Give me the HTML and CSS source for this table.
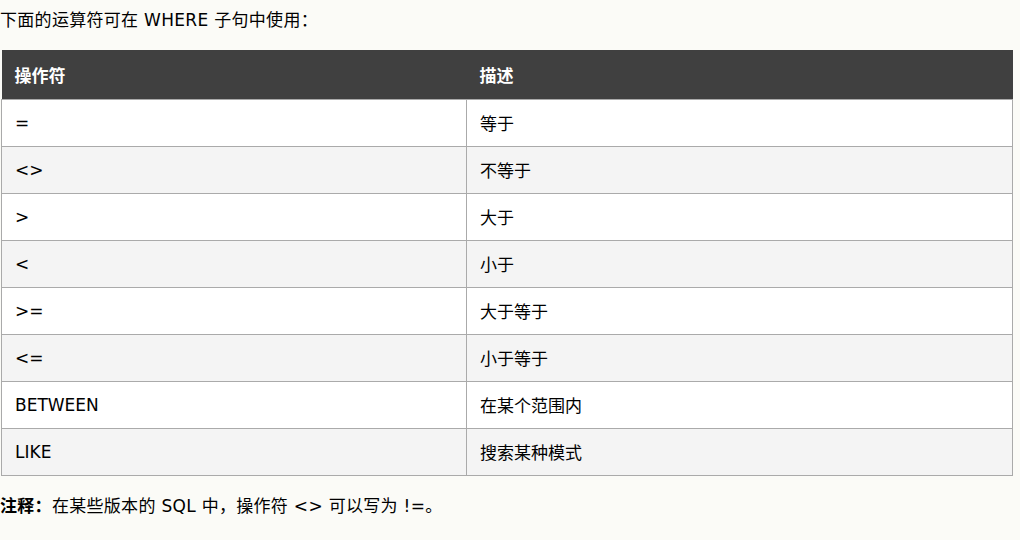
FILE: index.html
```html
<!DOCTYPE html>
<html lang="zh-CN">
<head>
<meta charset="utf-8">
<link rel="stylesheet" href="styles.css">
</head>
<body>
<div class="page">
  <p class="intro">下面的运算符可在 WHERE 子句中使用：</p>
  <table class="ops">
    <thead>
      <tr><th class="col-op">操作符</th><th>描述</th></tr>
    </thead>
    <tbody>
      <tr><td>=</td><td>等于</td></tr>
      <tr><td>&lt;&gt;</td><td>不等于</td></tr>
      <tr><td>&gt;</td><td>大于</td></tr>
      <tr><td>&lt;</td><td>小于</td></tr>
      <tr><td>&gt;=</td><td>大于等于</td></tr>
      <tr><td>&lt;=</td><td>小于等于</td></tr>
      <tr><td>BETWEEN</td><td>在某个范围内</td></tr>
      <tr><td>LIKE</td><td>搜索某种模式</td></tr>
    </tbody>
  </table>
  <p class="note"><b>注释：</b>在某些版本的 SQL 中，操作符 &lt;&gt; 可以写为 !=。</p>
</div>
</body>
</html>
```
FILE: styles.css
```css
html, body {
  margin: 0;
  padding: 0;
  background: #fbfbf7;
}
body {
  font-family: "DejaVu Sans", Verdana, "Noto Sans CJK SC", sans-serif;
  font-size: 17px;
  color: #000;
}
.page {
  padding: 0 7px 0 1px;
}
.intro {
  margin: 0 0 18px -1px;
  padding-top: 8px;
  line-height: 24px;
  letter-spacing: 0.3px;
}
.ops {
  width: 1012px;
  border-collapse: collapse;
  table-layout: fixed;
}
.ops th {
  background: #404040;
  color: #fff;
  font-weight: bold;
  text-align: left;
  height: 49px;
  padding: 0 13px;
  border: none;
  box-sizing: border-box;
}
.ops th.col-op {
  width: 465px;
}
.ops td {
  height: 47px;
  padding: 0 13px;
  border: 1px solid #aaaaaa;
  background: #fff;
  box-sizing: border-box;
}
.ops tbody tr:nth-child(even) td {
  background: #f4f4f4;
}
.note {
  margin: 18px 0 0 -1px;
  line-height: 24px;
  letter-spacing: 0.3px;
}
.note b {
  font-weight: bold;
}
```
